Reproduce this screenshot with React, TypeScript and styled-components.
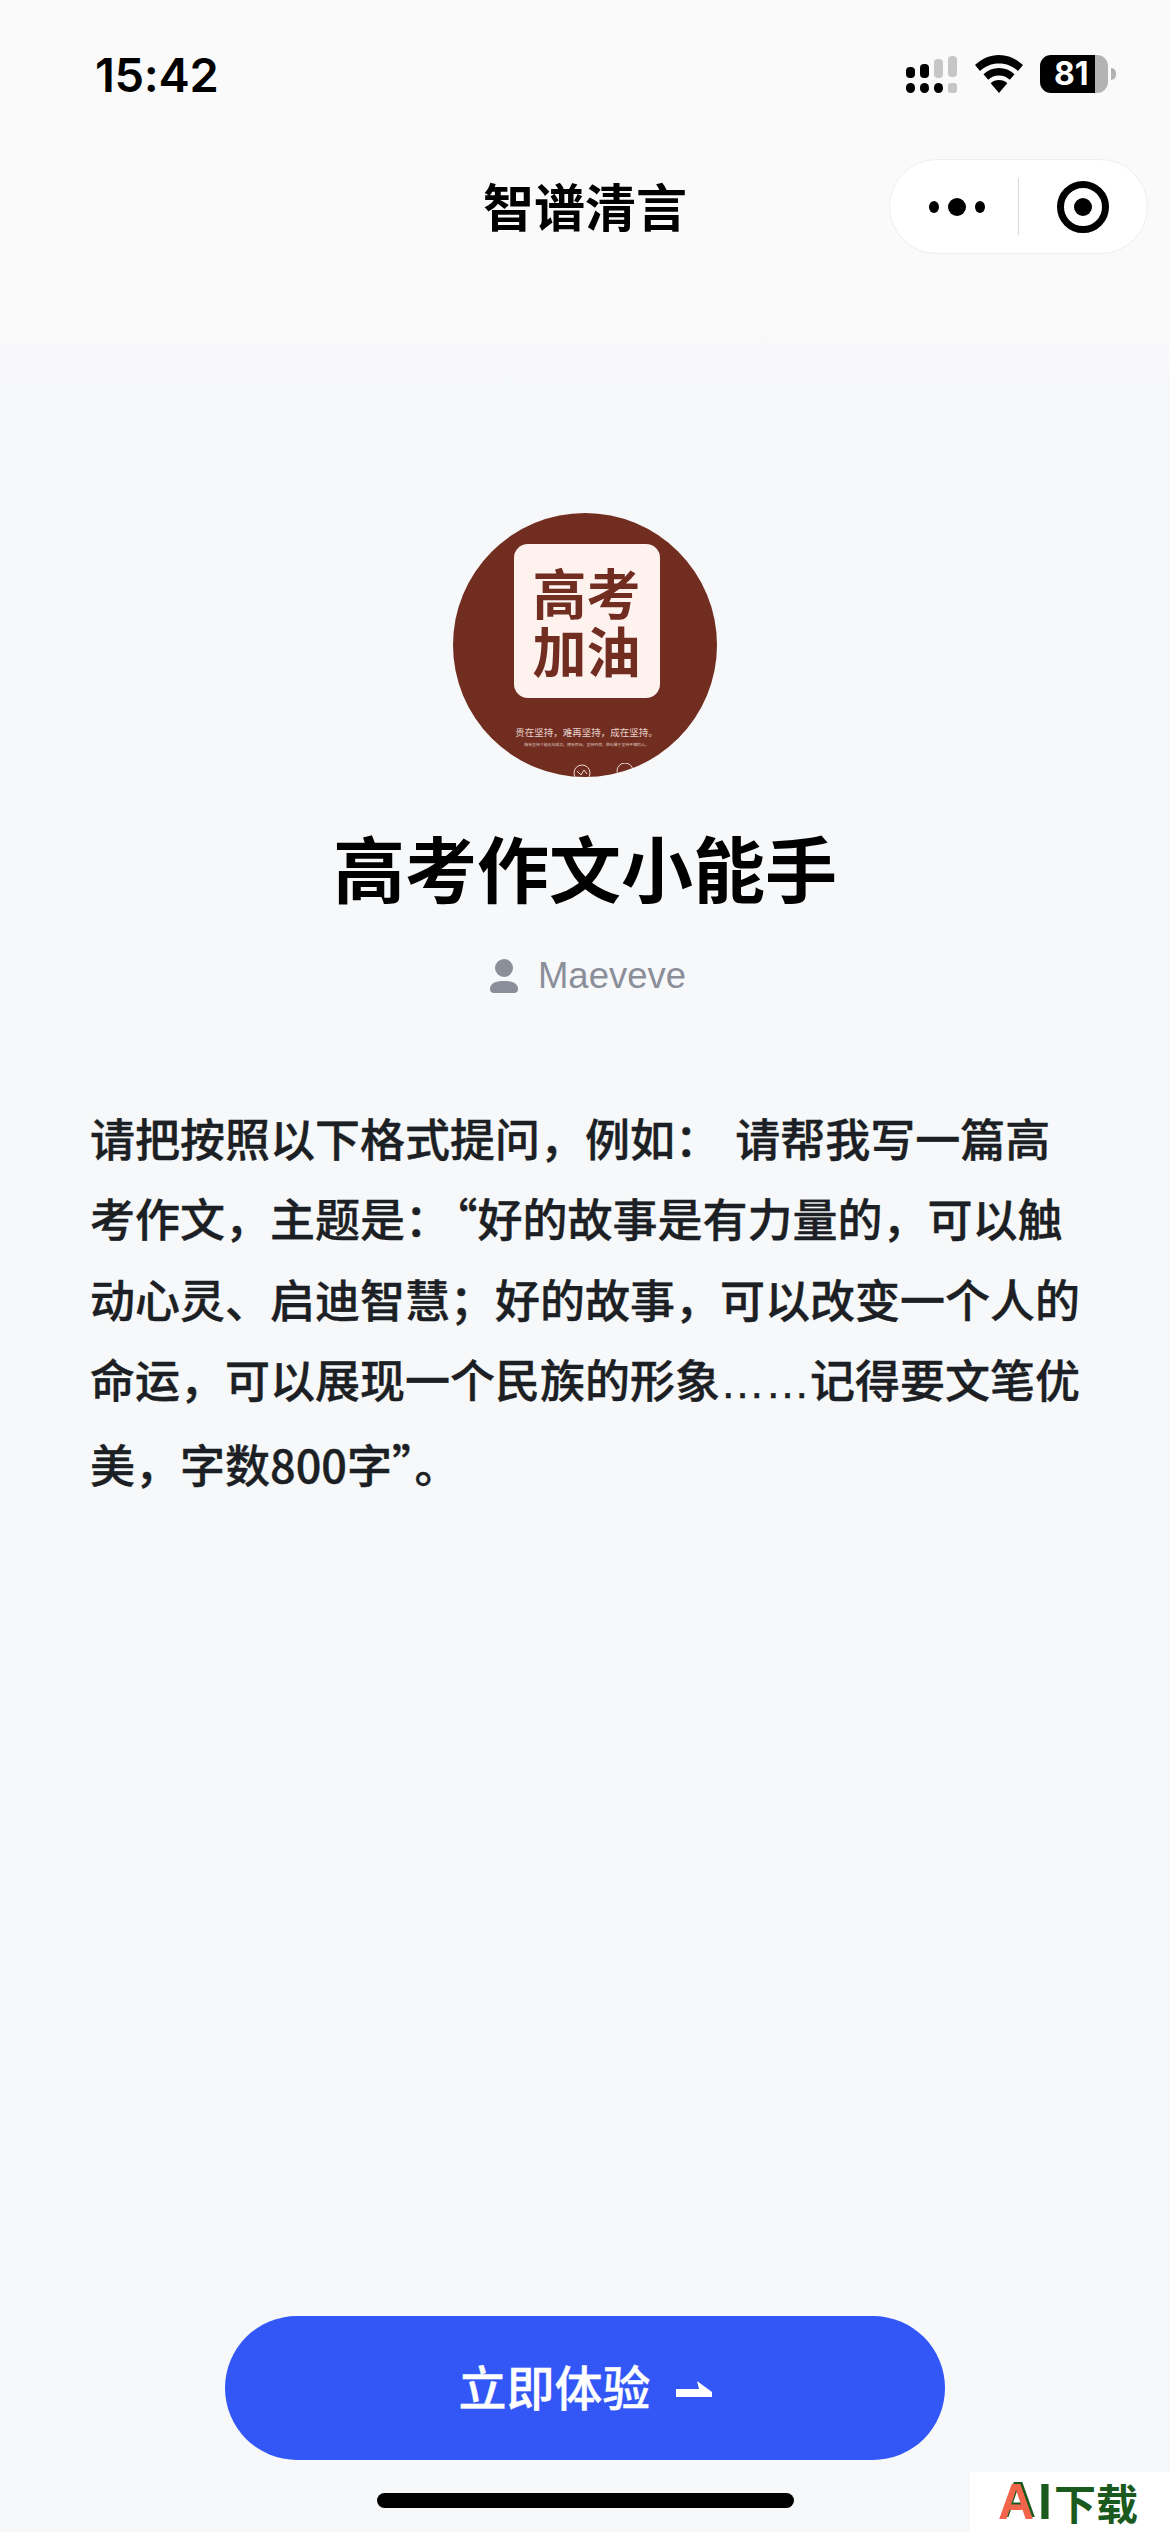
import React from "react";
import styled, { createGlobalStyle } from "styled-components";

const CJK = `"Noto Sans CJK SC", "Liberation Sans", sans-serif`;

const Global = createGlobalStyle`
  html, body { margin: 0; padding: 0; }
  body { background: #f7f8fa; font-family: ${CJK}; }
  * { box-sizing: border-box; }
`;

const Page = styled.div`
  position: relative;
  width: 1170px;
  height: 2532px;
  overflow: hidden;
  display: flex;
  flex-direction: column;
  background: linear-gradient(180deg, #fafafa 0, #fafafa 230px, #f7f8fa 420px);
`;

const StatusBar = styled.header`
  height: 148px;
  display: flex;
  align-items: center;
  justify-content: space-between;
  padding: 0 62px 0 95px;
`;

const Clock = styled.span`
  font-family: Inter, sans-serif;
  font-size: 47px;
  font-weight: 600;
  letter-spacing: -0.3px;
  color: #000;
`;

const StatusIcons = styled.div`
  display: flex;
  align-items: center;
  gap: 17px;
`;

const Battery = styled.div`
  position: relative;
  width: 68px;
  height: 38px;
  border-radius: 11px;
  background: linear-gradient(90deg, #000 0, #000 55px, #b3b3b3 55px);
  color: #fff;
  font-family: Inter, sans-serif;
  font-weight: 700;
  font-size: 32px;
  line-height: 38px;
  padding-left: 14px;
  &::after {
    content: "";
    position: absolute;
    right: -8px;
    top: 13px;
    width: 5px;
    height: 12px;
    border-radius: 0 6px 6px 0;
    background: #b3b3b3;
  }
`;

const NavBar = styled.nav`
  height: 117px;
  display: grid;
  grid-template-columns: 1fr auto 1fr;
  align-items: center;
  padding: 0 22px;
`;

const NavTitle = styled.h1`
  grid-column: 2;
  margin: 0 0 2px;
  font-size: 51px;
  font-weight: 700;
  color: #000;
  line-height: 1;
`;

const Capsule = styled.div`
  grid-column: 3;
  justify-self: end;
  width: 259px;
  height: 95px;
  border-radius: 48px;
  background: #fff;
  border: 1px solid #eeeeee;
  display: flex;
  align-items: center;
`;

const CapsuleCell = styled.div`
  flex: 1;
  height: 100%;
  display: flex;
  align-items: center;
  justify-content: center;
`;

const CapsuleDivider = styled.div`
  width: 1px;
  height: 57px;
  background: #d9d9d9;
`;

const DotsIcon = styled.svg`
  margin-left: 6px;
`;

const Main = styled.main`
  flex: 1;
  display: flex;
  flex-direction: column;
  align-items: center;
  padding-top: 248px;
`;

const Avatar = styled.div`
  width: 264px;
  height: 264px;
  border-radius: 50%;
  overflow: hidden;
  background: #722d21;
  display: flex;
  flex-direction: column;
  align-items: center;
  padding-top: 31px;
`;

const AvatarCard = styled.div`
  flex: none;
  width: 146px;
  height: 154px;
  margin-left: 3px;
  border-radius: 14px;
  background: #fdf2ee;
  color: #722d21;
  font-size: 54px;
  font-weight: 700;
  line-height: 58px;
  text-align: center;
  display: flex;
  align-items: center;
  justify-content: center;
`;

const AvatarMotto = styled.div`
  flex: none;
  margin: 28px 0 0 3px;
  font-size: 9.5px;
  line-height: 12px;
  color: #e6d3cd;
  white-space: nowrap;
`;

const AvatarFine = styled.div`
  flex: none;
  margin: 3px 0 0 3px;
  font-size: 3.9px;
  line-height: 6px;
  color: #dcc4bd;
  white-space: nowrap;
`;

const AvatarIcons = styled.svg`
  margin-top: 16px;
  flex: none;
`;

const Heading = styled.h2`
  margin: 46px 0 0;
  font-size: 72px;
  font-weight: 700;
  line-height: 86px;
  color: #000;
`;

const Author = styled.div`
  margin-top: 45px;
  padding-left: 6px;
  display: flex;
  align-items: center;
  gap: 20px;
  font-family: "Liberation Sans", sans-serif;
  font-size: 36.5px;
  line-height: 44px;
  color: #8b8f99;
`;

const Intro = styled.p`
  align-self: stretch;
  margin: 100px 0 0;
  padding: 0 86px 0 90px;
  font-size: 45px;
  font-weight: 500;
  line-height: 80.4px;
  word-spacing: 5px;
  color: #1c1f23;
  -webkit-text-stroke: 0.4px #1c1f23;
`;

const OpenQuote = styled.span`
  margin-left: 5px;
`;

const Dots = styled.span`
  font-family: "Liberation Sans", sans-serif;
`;

const Footer = styled.footer`
  display: flex;
  flex-direction: column;
  align-items: center;
`;

const CTA = styled.button`
  width: 720px;
  height: 144px;
  border: 0;
  border-radius: 72px;
  background: #3257f6;
  color: #fff;
  font-family: ${CJK};
  font-size: 48px;
  font-weight: 500;
  -webkit-text-stroke: 0.4px #fff;
  padding: 0 0 6px;
  display: flex;
  align-items: center;
  justify-content: center;
  gap: 25px;
`;

const ArrowIcon = styled.svg`
  margin-top: 8px;
`;

const HomeBar = styled.div`
  width: 417px;
  height: 15px;
  margin: 33px 0 24px;
  border-radius: 8px;
  background: #000;
`;

const Watermark = styled.div`
  position: absolute;
  right: 0;
  bottom: 0;
  width: 200px;
  height: 60px;
  background: #fff;
  padding-left: 28px;
  display: flex;
  align-items: center;
  color: #1b5a1e;
  font-size: 42px;
  font-weight: 700;
  line-height: 56px;
  white-space: nowrap;
`;

const WatermarkA = styled.span`
  font-family: "Liberation Sans", sans-serif;
  font-size: 50px;
  color: #f2654a;
  text-shadow: 2px -2px 0 #1b5a1e;
`;

const WatermarkI = styled.span`
  font-family: "Liberation Sans", sans-serif;
  font-size: 50px;
  margin: 0 2px 0 4px;
`;

const SignalIcon = () => (
  <svg width="52" height="38" viewBox="0 0 52 38">
    <rect x="0" y="12" width="9" height="11" rx="4" fill="#000" />
    <rect x="14" y="9" width="9" height="14" rx="4" fill="#000" />
    <rect x="28" y="4" width="9" height="19" rx="4" fill="#c6c6c6" />
    <rect x="42" y="1" width="9" height="21" rx="4" fill="#c6c6c6" />
    <rect x="0" y="28" width="9" height="10" rx="4.5" fill="#000" />
    <rect x="14" y="28" width="9" height="10" rx="4.5" fill="#000" />
    <rect x="28" y="28" width="9" height="10" rx="4.5" fill="#000" />
    <rect x="42" y="28" width="9" height="10" rx="3" fill="#c6c6c6" />
  </svg>
);

const WifiIcon = () => (
  <svg width="48" height="38" viewBox="0 0 48 38">
    <path d="M24 0C15 0 7 3.600 0 10l5 6c5.500-5 11.500-7.500 19-7.500S37.500 11 43 16l5-6C41 3.600 33 0 24 0Z" fill="#000" />
    <path d="M24 13c-6 0-11 2.200-15.500 6.200l4.700 5.600c3-2.700 6.500-4.200 10.800-4.200s7.800 1.500 10.800 4.200l4.700-5.600C35 15.200 30 13 24 13Z" fill="#000" />
    <path d="M24 25c-3.300 0-6 1.100-8.300 3.200L24 38l8.300-9.800C30 26.100 27.300 25 24 25Z" fill="#000" />
  </svg>
);

const MoreDots = () => (
  <DotsIcon width="56" height="20" viewBox="0 0 56 20">
    <ellipse cx="5" cy="10" rx="5" ry="6" fill="#000" />
    <circle cx="28" cy="10" r="9" fill="#000" />
    <ellipse cx="51" cy="10" rx="5" ry="6" fill="#000" />
  </DotsIcon>
);

const TargetIcon = () => (
  <svg width="54" height="54" viewBox="0 0 54 54">
    <circle cx="27" cy="27" r="22.500" fill="none" stroke="#000" strokeWidth="7" />
    <circle cx="27" cy="27" r="9" fill="#000" />
  </svg>
);

const UserIcon = () => (
  <svg width="28" height="34" viewBox="0 0 28 34">
    <circle cx="14" cy="9" r="9" fill="#8b8f99" />
    <path d="M0 30c0-5.500 5-8 14-8s14 2.500 14 8c0 2.500-1.500 4-4 4H4c-2.500 0-4-1.500-4-4Z" fill="#8b8f99" />
  </svg>
);

const HalfArrow = () => (
  <ArrowIcon width="36" height="16" viewBox="0 0 36 16">
    <path d="M0 8h23l-2-8 15 11v5H0Z" fill="#fff" />
  </ArrowIcon>
);

export default function App() {
  return (
    <Page>
      <Global />
      <StatusBar>
        <Clock>15:42</Clock>
        <StatusIcons>
          <SignalIcon />
          <WifiIcon />
          <Battery>81</Battery>
        </StatusIcons>
      </StatusBar>
      <NavBar>
        <NavTitle>智谱清言</NavTitle>
        <Capsule>
          <CapsuleCell>
            <MoreDots />
          </CapsuleCell>
          <CapsuleDivider />
          <CapsuleCell>
            <TargetIcon />
          </CapsuleCell>
        </Capsule>
      </NavBar>
      <Main>
        <Avatar>
          <AvatarCard>
            高考
            <br />
            加油
          </AvatarCard>
          <AvatarMotto>贵在坚持，难再坚持，成在坚持。</AvatarMotto>
          <AvatarFine>胸有坚持才能走向成功，拥有目标，坚持到底，胜利属于坚持不懈的人。</AvatarFine>
          <AvatarIcons width="100" height="24" viewBox="0 0 100 24">
            <circle cx="47" cy="10" r="8" fill="none" stroke="#ead8d2" strokeWidth="1" />
            <path d="M42 8l4 4 3-5 3 4" fill="none" stroke="#ead8d2" strokeWidth="1" />
            <circle cx="90" cy="8" r="8" fill="none" stroke="#ead8d2" strokeWidth="1" />
          </AvatarIcons>
        </Avatar>
        <Heading>高考作文小能手</Heading>
        <Author>
          <UserIcon />
          Maeveve
        </Author>
        <Intro>
          请把按照以下格式提问，例如： 请帮我写一篇高考作文，主题是：<OpenQuote>“</OpenQuote>好的故事是有力量的，可以触动心灵、启迪智慧；好的故事，可以改变一个人的命运，可以展现一个民族的形象<Dots>……</Dots>记得要文笔优美，字数800字”。
        </Intro>
      </Main>
      <Footer>
        <CTA>
          立即体验
          <HalfArrow />
        </CTA>
        <HomeBar />
      </Footer>
      <Watermark>
        <WatermarkA>A</WatermarkA>
        <WatermarkI>I</WatermarkI>
        下载
      </Watermark>
    </Page>
  );
}
